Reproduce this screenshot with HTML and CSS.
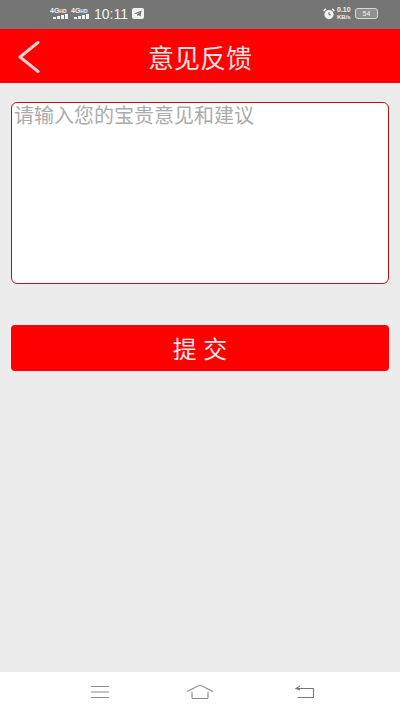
FILE: index.html
```html
<!DOCTYPE html>
<html lang="zh">
<head>
    <meta charset="UTF-8">
    <link rel="stylesheet" href="styles.css">
</head>
<body>
    <div class="status-bar">
        <div class="signal">
            <span class="net">4G<small>HD</small></span>
            <span class="bars"><i class="b1"></i><i class="b2"></i><i class="b3"></i><i class="b4"></i></span>
        </div>
        <div class="signal">
            <span class="net">4G<small>HD</small></span>
            <span class="bars"><i class="b1"></i><i class="b2"></i><i class="b3"></i><i class="b4"></i></span>
        </div>
        <span class="time">10:11</span>
        <svg class="telegram" width="12" height="11" viewBox="0 0 12 11">
            <rect width="12" height="11" rx="2" fill="#f2f2f2"/>
            <path d="M2 5.6 9.6 2.4 8.6 8.6 6.3 7 5.2 8.2 5 6.4 8 3.9 4.2 6.1Z" fill="#757575"/>
        </svg>
        <div class="status-right">
            <svg width="12" height="12" viewBox="0 0 12 12">
                <circle cx="6" cy="6.6" r="4.6" fill="#f2f2f2"/>
                <path d="M.6 3 2.8.8M11.4 3 9.2.8" stroke="#f2f2f2" stroke-width="1.4"/>
                <path d="M6 4v2.8h2" stroke="#757575" fill="none"/>
            </svg>
            <span class="speed">0.10<br><small>KB/s</small></span>
            <div class="battery"><span>54</span></div>
        </div>
    </div>

    <div class="header">
        <svg class="back" width="24" height="34" viewBox="0 0 24 34">
            <path d="M22 2.5 4 17 22 31.5" fill="none" stroke="#fbcfcf" stroke-width="3" stroke-linecap="round" stroke-linejoin="round"/>
        </svg>
        <h2>意见反馈</h2>
    </div>

    <div class="content-area">
        <textarea class="feedback" placeholder="请输入您的宝贵意见和建议"></textarea>
        <button class="submit">提 交</button>
    </div>

    <div class="nav-bar">
        <svg width="20" height="14" viewBox="0 0 20 14">
            <path d="M1 1.5h18M1 7h18M1 12.5h18" stroke="#8a8a8a" stroke-width="1.2"/>
        </svg>
        <svg width="28" height="16" viewBox="0 0 28 16">
            <path d="M1 7.5 14 1 27 7.5M6 8v5.5q0 1 1 1h14q1 0 1-1V8" fill="none" stroke="#8a8a8a" stroke-width="1.1"/>
        </svg>
        <svg class="nav-back" width="20" height="14" viewBox="0 0 20 14">
            <path d="M1 3.5h17.5v9H3M5 1 1 3.5 5 5" fill="none" stroke="#777" stroke-width="1.1"/>
        </svg>
    </div>
</body>
</html>
```

FILE: styles.css
```css
* {
    box-sizing: border-box;
}

body {
    margin: 0;
    width: 400px;
    height: 711px;
    display: flex;
    flex-direction: column;
    background: #ececec;
    font-family: "Liberation Sans", "Noto Sans CJK SC", sans-serif;
    overflow: hidden;
}

.status-bar {
    height: 29px;
    flex: none;
    background: #757575;
    color: #f2f2f2;
    display: flex;
    align-items: center;
    padding: 0 22px 2px 50px;
}

.signal {
    width: 18px;
    margin-right: 3px;
    display: flex;
    flex-direction: column;
    align-items: flex-end;
}

.net {
    width: 100%;
    font-size: 7px;
    line-height: 6px;
    font-weight: bold;
}

.net small {
    font-size: 5px;
    vertical-align: top;
}

.bars {
    display: flex;
    align-items: flex-end;
    gap: 1px;
    height: 5px;
}

.bars i {
    width: 3px;
    background: #f2f2f2;
}

.b1 {
    height: 2px;
}

.b2 {
    height: 3px;
}

.b3 {
    height: 4px;
}

.b4 {
    height: 5px;
}

.time {
    font-size: 14px;
    margin-left: 2px;
}

.telegram {
    margin-left: 4px;
}

.status-right {
    margin-left: auto;
    display: flex;
    align-items: center;
    gap: 2px;
}

.speed {
    font-size: 7px;
    line-height: 7px;
    width: 15px;
    margin-right: 1px;
    font-weight: bold;
}

.speed small {
    font-size: 6px;
}

.battery {
    width: 23px;
    height: 11px;
    border: 1px solid #d8d8d8;
    border-radius: 3px;
    background: #8f8f8f;
    font-size: 7px;
    line-height: 9px;
    text-align: center;
}

.header {
    height: 54px;
    flex: none;
    background: #ff0000;
    position: relative;
    display: flex;
    align-items: center;
    justify-content: center;
}

.header h2 {
    margin: 0;
    font-size: 26px;
    font-weight: normal;
    color: #fbe3e3;
}

.back {
    position: absolute;
    left: 16px;
    top: 11px;
}

.content-area {
    flex: 1;
    padding: 19px 11px 0;
    display: flex;
    flex-direction: column;
}

.feedback {
    height: 182px;
    padding: 1px 2px;
    border: 1px solid #b3131f;
    border-radius: 6px;
    background: #fff;
    font-family: inherit;
    font-size: 20px;
    line-height: 24px;
    resize: none;
    outline: none;
}

.feedback::placeholder {
    color: #ababab;
}

.submit {
    height: 46px;
    margin-top: 41px;
    border: none;
    border-radius: 4px;
    background: #ff0000;
    color: #fbe9e9;
    font-family: inherit;
    font-size: 24px;
    padding: 0 0 2px;
}

.nav-bar {
    height: 39px;
    flex: none;
    background: #fff;
    display: flex;
    align-items: center;
    padding: 0 0 0 90px;
    gap: 76px;
}

.nav-back {
    margin-left: 5px;
}
```
